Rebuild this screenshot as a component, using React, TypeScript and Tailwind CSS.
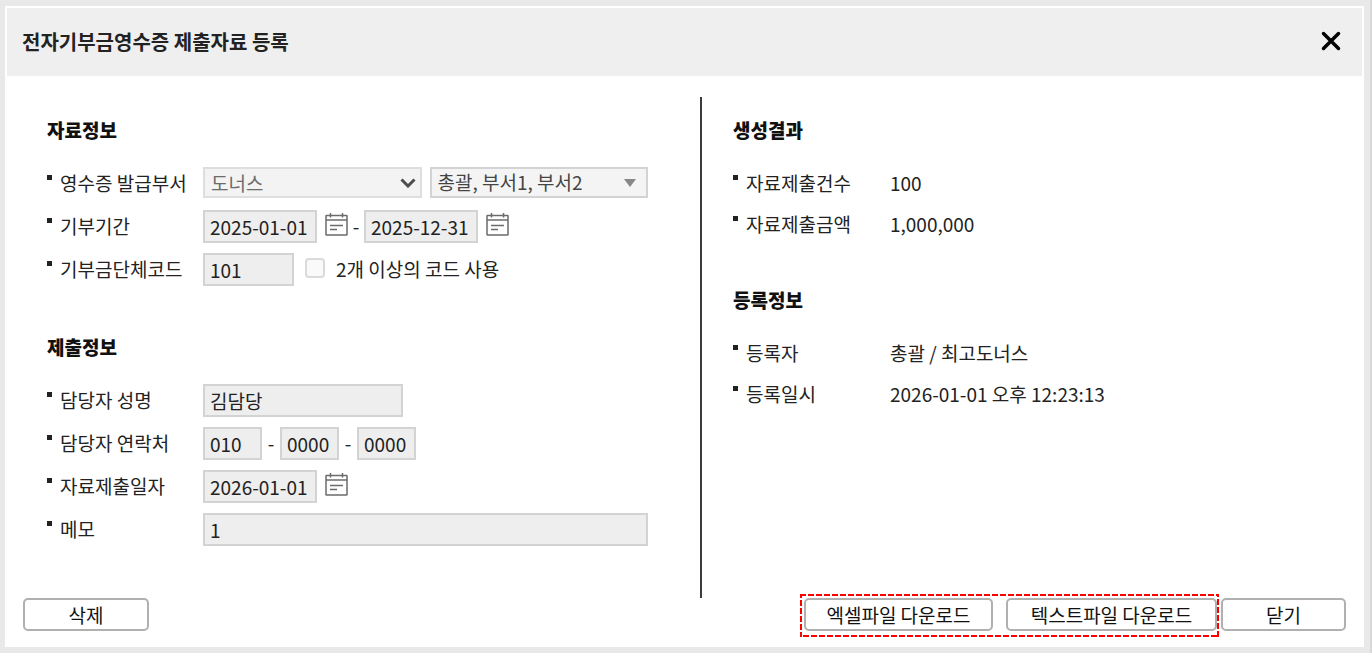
import React, { FunctionComponent, ReactNode, useState } from "react";

const inputStyles = "h-[33px] min-w-0 rounded-none border-2 border-[#d3d3d3] bg-[#eeeeee] pl-[5px] pb-px text-[19px] text-[#222222]";
const buttonStyles = "h-[33px] cursor-pointer rounded-[5px] border-2 border-[#b0b0b0] bg-white text-center text-[19px] leading-7 text-[#111111]";

const CalendarIcon = () => (
  <svg className="block h-[23px] w-[23px]" viewBox="0 0 23 23" fill="none" stroke="#6b6b6b" aria-hidden="true">
    <rect x="1" y="2.500" width="21" height="19.500" rx="0.500" strokeWidth="1.500" />
    <path d="M1 7h21" strokeWidth="1.500" />
    <path d="M5.500 0v4.500M17.500 0v4.500" strokeWidth="1.500" />
    <path d="M5 12.500h13M5 16.500h7" strokeWidth="1.500" />
  </svg>
);

interface RowProps {
  label: string;
  htmlFor?: string;
  children: ReactNode;
}

const Row: FunctionComponent<RowProps> = ({ label, htmlFor, children }) => (
  <div className="flex h-[33px] items-center">
    <span className="mt-2 h-[5px] w-[5px] shrink-0 self-start bg-[#222222]" />
    {htmlFor ? (
      <label htmlFor={htmlFor} className="ml-2 w-[143px] shrink-0 pb-[2px] whitespace-nowrap">
        {label}
      </label>
    ) : (
      <span className="ml-2 w-[144px] shrink-0 pb-[2px] whitespace-nowrap">{label}</span>
    )}
    {children}
  </div>
);

const SectionTitle = ({ children }: { children: ReactNode }) => (
  <h2 className="mb-[23px] text-[19px] leading-7 font-black text-[#111111]">{children}</h2>
);

interface DateFieldProps {
  id: string;
  label?: string;
  value: string;
}

const DateField: FunctionComponent<DateFieldProps> = ({ id, label, value }) => (
  <>
    <input id={id} type="text" readOnly aria-label={label} defaultValue={value} className={`${inputStyles} w-[114px]`} />
    <button type="button" aria-label="날짜 선택" className="mb-1 ml-2 shrink-0 cursor-pointer">
      <CalendarIcon />
    </button>
  </>
);

const Hyphen = () => <span className="w-[18px] shrink-0 pb-[2px] text-center">-</span>;

const SubmitForm = () => {
  const [multiCode, setMultiCode] = useState(false);

  return (
    <div className="pt-[19px] pr-[52px] pb-[52px] pl-10">
      <section>
        <SectionTitle>자료정보</SectionTitle>
        <div className="flex flex-col gap-[10px]">
          <Row label="영수증 발급부서" htmlFor="org">
            <div className="relative mr-2 mb-[2px] flex-1">
              <select
                id="org"
                disabled
                className="block h-[31px] w-full appearance-none border-2 border-[#dedede] bg-[#f3f3f3] pt-px pl-[6px] text-[19px] leading-6 text-[#6c6c6c] opacity-100"
              >
                <option>도너스</option>
              </select>
              <svg className="pointer-events-none absolute top-[11px] right-[6px] h-[10px] w-4" viewBox="0 0 16 10" fill="none" stroke="#4d4d4d" strokeWidth="3" aria-hidden="true">
                <path d="M1.500 1.500 8 8l6.500-6.500" />
              </svg>
            </div>
            <div className="relative mb-[2px] flex-1">
              <select
                aria-label="부서"
                className="block h-[31px] w-full appearance-none border-2 border-[#d3d3d3] bg-[#f4f4f4] pb-[2px] pl-[6px] text-[19px] leading-6 text-[#444444]"
              >
                <option>총괄, 부서1, 부서2</option>
              </select>
              <svg className="pointer-events-none absolute top-3 right-3 h-2 w-3" viewBox="0 0 12 8" fill="#888888" aria-hidden="true">
                <path d="M0 0h12L6 8z" />
              </svg>
            </div>
          </Row>
          <Row label="기부기간" htmlFor="from">
            <DateField id="from" value="2025-01-01" />
            <span className="w-4 shrink-0 pb-[2px] text-center">-</span>
            <DateField id="to" label="기부기간 종료일" value="2025-12-31" />
          </Row>
          <Row label="기부금단체코드" htmlFor="code">
            <input id="code" type="text" readOnly defaultValue="101" className={`${inputStyles} w-[91px]`} />
            <input
              id="multi-code"
              type="checkbox"
              checked={multiCode}
              onChange={(e) => setMultiCode(e.target.checked)}
              className="mb-1 ml-[11px] h-5 w-5 appearance-none rounded-[4px] border-2 border-[#dadada] bg-[#fafafa] checked:bg-[#777777]"
            />
            <label htmlFor="multi-code" className="ml-[11px] pb-[2px] whitespace-nowrap">
              2개 이상의 코드 사용
            </label>
          </Row>
        </div>
      </section>

      <section className="mt-[47px]">
        <SectionTitle>제출정보</SectionTitle>
        <div className="flex flex-col gap-[10px]">
          <Row label="담당자 성명" htmlFor="manager">
            <input id="manager" type="text" readOnly defaultValue="김담당" className={`${inputStyles} w-[200px]`} />
          </Row>
          <Row label="담당자 연락처" htmlFor="tel1">
            <input id="tel1" type="text" readOnly defaultValue="010" className={`${inputStyles} w-[59px]`} />
            <Hyphen />
            <input aria-label="연락처 가운데 자리" type="text" readOnly defaultValue="0000" className={`${inputStyles} w-[59px]`} />
            <Hyphen />
            <input aria-label="연락처 끝자리" type="text" readOnly defaultValue="0000" className={`${inputStyles} w-[59px]`} />
          </Row>
          <Row label="자료제출일자" htmlFor="submitted">
            <DateField id="submitted" value="2026-01-01" />
          </Row>
          <Row label="메모" htmlFor="memo">
            <input id="memo" type="text" readOnly defaultValue="1" className={`${inputStyles} flex-1`} />
          </Row>
        </div>
      </section>
    </div>
  );
};

const ResultInfo = () => (
  <div className="border-l-2 border-[#3c3c3c] pt-[19px] pl-[31px]">
    <section>
      <SectionTitle>생성결과</SectionTitle>
      <div className="flex flex-col gap-2">
        <Row label="자료제출건수">
          <span className="pb-[2px]">100</span>
        </Row>
        <Row label="자료제출금액">
          <span className="pb-[2px]">1,000,000</span>
        </Row>
      </div>
    </section>
    <section className="mt-[45px]">
      <SectionTitle>등록정보</SectionTitle>
      <div className="flex flex-col gap-2">
        <Row label="등록자">
          <span className="pb-[2px]">총괄 / 최고도너스</span>
        </Row>
        <Row label="등록일시">
          <span className="pb-[2px]">2026-01-01 오후 12:23:13</span>
        </Row>
      </div>
    </section>
  </div>
);

export default function App() {
  return (
    <div className="flex min-h-screen flex-col border-r-2 border-[#d8d8d8] bg-[#e9e9e9] pt-[6px] pr-[6px] pb-[6px] pl-[5px] font-['Noto_Sans_CJK_KR','Noto_Sans',sans-serif] text-[19px] leading-7 text-[#222222]">
      <div role="dialog" aria-labelledby="dialog-title" className="flex flex-1 flex-col bg-white p-[2px]">
        <header className="flex h-[68px] items-center justify-between bg-[#efefef] pr-[21px] pl-[15px]">
          <h1 id="dialog-title" className="text-[20px] font-bold text-[#222222]">
            전자기부금영수증 제출자료 등록
          </h1>
          <button type="button" aria-label="창 닫기" className="mb-[2px] cursor-pointer">
            <svg className="block h-5 w-5" viewBox="0 0 20 20" fill="none" stroke="#000000" strokeWidth="3.500" strokeLinecap="round" aria-hidden="true">
              <path d="M2.500 2.500l15 15M17.500 2.500l-15 15" />
            </svg>
          </button>
        </header>

        <main className="mt-[21px] grid flex-1 grid-cols-[693fr_662fr]">
          <SubmitForm />
          <ResultInfo />
        </main>

        <footer className="flex items-start justify-between pr-4 pb-2 pl-4">
          <button type="button" className={`${buttonStyles} w-[126px]`}>
            삭제
          </button>
          <div className="-mt-1 flex items-start gap-[2px]">
            <div className="relative flex gap-[13px] pt-1 pr-[2px] pb-[6px] pl-1">
              <button type="button" className={`${buttonStyles} w-[189px]`}>
                엑셀파일 다운로드
              </button>
              <button type="button" className={`${buttonStyles} w-[211px]`}>
                텍스트파일 다운로드
              </button>
              <svg className="pointer-events-none absolute inset-0 h-full w-full" fill="none" stroke="#ff0000" strokeWidth="4" strokeDasharray="6 2" aria-hidden="true">
                <rect width="100%" height="100%" />
              </svg>
            </div>
            <button type="button" className={`${buttonStyles} mt-1 w-[125px]`}>
              닫기
            </button>
          </div>
        </footer>
      </div>
    </div>
  );
}
